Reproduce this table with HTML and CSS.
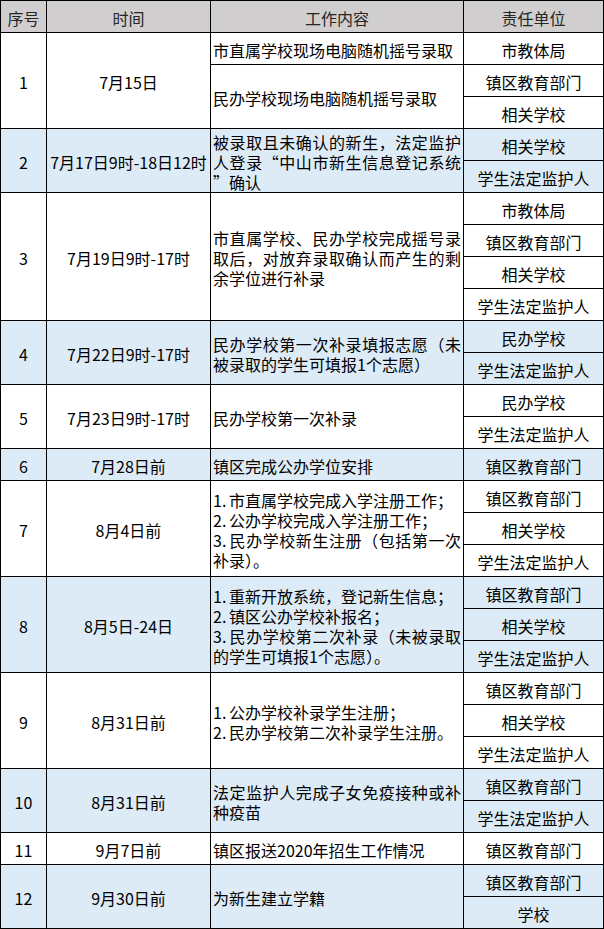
FILE: index.html
```html
<!DOCTYPE html>
<html lang="zh-CN">
<head>
<meta charset="utf-8">
<title>招生工作安排</title>
<link rel="stylesheet" href="styles.css">
</head>
<body>
<div class="sheet">
  <div class="cell head">序号</div>
  <div class="cell head">时间</div>
  <div class="cell head">工作内容</div>
  <div class="cell head">责任单位</div>

  <div class="cell c r3">1</div>
  <div class="cell c r3">7月15日</div>
  <div class="cell l">市直属学校现场电脑随机摇号录取</div>
  <div class="cell c">市教体局</div>
  <div class="cell l r2">民办学校现场电脑随机摇号录取</div>
  <div class="cell c">镇区教育部门</div>
  <div class="cell c">相关学校</div>

  <div class="cell c r2 blue">2</div>
  <div class="cell c r2 blue">7月17日9时-18日12时</div>
  <div class="cell l r2 blue any"><div class="txt">被录取且未确认的新生，法定监护人登录<span class="q">“</span>中山市新生信息登记系统<span class="q">”</span>确认</div></div>
  <div class="cell c blue">相关学校</div>
  <div class="cell c blue">学生法定监护人</div>

  <div class="cell c r4">3</div>
  <div class="cell c r4">7月19日9时-17时</div>
  <div class="cell l r4"><div class="txt">市直属学校、民办学校完成摇号录取后，对放弃录取确认而产生的剩余学位进行补录</div></div>
  <div class="cell c">市教体局</div>
  <div class="cell c">镇区教育部门</div>
  <div class="cell c">相关学校</div>
  <div class="cell c">学生法定监护人</div>

  <div class="cell c r2 blue">4</div>
  <div class="cell c r2 blue">7月22日9时-17时</div>
  <div class="cell l r2 blue"><div class="txt">民办学校第一次补录填报志愿（未被录取的学生可填报1个志愿）</div></div>
  <div class="cell c blue">民办学校</div>
  <div class="cell c blue">学生法定监护人</div>

  <div class="cell c r2">5</div>
  <div class="cell c r2">7月23日9时-17时</div>
  <div class="cell l r2">民办学校第一次补录</div>
  <div class="cell c">民办学校</div>
  <div class="cell c">学生法定监护人</div>

  <div class="cell c blue">6</div>
  <div class="cell c blue">7月28日前</div>
  <div class="cell l blue">镇区完成公办学位安排</div>
  <div class="cell c blue">镇区教育部门</div>

  <div class="cell c r3">7</div>
  <div class="cell c r3">8月4日前</div>
  <div class="cell l r3"><div class="txt"><div><span class="num">1.</span>市直属学校完成入学注册工作；</div><div><span class="num">2.</span>公办学校完成入学注册工作；</div><div><span class="num">3.</span>民办学校新生注册（包括第一次补录）。</div></div></div>
  <div class="cell c">镇区教育部门</div>
  <div class="cell c">相关学校</div>
  <div class="cell c">学生法定监护人</div>

  <div class="cell c r3 blue">8</div>
  <div class="cell c r3 blue">8月5日-24日</div>
  <div class="cell l r3 blue"><div class="txt"><div><span class="num">1.</span>重新开放系统，登记新生信息；</div><div><span class="num">2.</span>镇区公办学校补报名；</div><div><span class="num">3.</span>民办学校第二次补录（未被录取的学生可填报1个志愿）。</div></div></div>
  <div class="cell c blue">镇区教育部门</div>
  <div class="cell c blue">相关学校</div>
  <div class="cell c blue">学生法定监护人</div>

  <div class="cell c r3">9</div>
  <div class="cell c r3">8月31日前</div>
  <div class="cell l r3"><div class="txt"><div><span class="num">1.</span>公办学校补录学生注册；</div><div><span class="num">2.</span>民办学校第二次补录学生注册。</div></div></div>
  <div class="cell c">镇区教育部门</div>
  <div class="cell c">相关学校</div>
  <div class="cell c">学生法定监护人</div>

  <div class="cell c r2 blue">10</div>
  <div class="cell c r2 blue">8月31日前</div>
  <div class="cell l r2 blue"><div class="txt">法定监护人完成子女免疫接种或补种疫苗</div></div>
  <div class="cell c blue">镇区教育部门</div>
  <div class="cell c blue">学生法定监护人</div>

  <div class="cell c">11</div>
  <div class="cell c">9月7日前</div>
  <div class="cell l">镇区报送2020年招生工作情况</div>
  <div class="cell c">镇区教育部门</div>

  <div class="cell c r2 blue">12</div>
  <div class="cell c r2 blue">9月30日前</div>
  <div class="cell l r2 blue">为新生建立学籍</div>
  <div class="cell c blue">镇区教育部门</div>
  <div class="cell c blue">学校</div>
</div>
</body>
</html>
```

FILE: styles.css
```css
html, body {
  margin: 0;
  padding: 0;
  background: #ffffff;
}

body {
  font-family: "Noto Sans CJK SC", "Noto Sans", sans-serif;
  font-size: 16px;
  color: #000000;
  overflow: hidden;
}

.sheet {
  display: grid;
  grid-template-columns: 45px 163px 252px 139px;
  grid-auto-rows: 31px;
  gap: 1px;
  padding: 1px;
  width: 604px;
  box-sizing: border-box;
  background: #000000;
}

.cell {
  background: #ffffff;
  display: flex;
  align-items: center;
  padding: 3px 2px 0;
  box-sizing: border-box;
  line-height: 20px;
  white-space: nowrap;
  min-width: 0;
}

.head {
  background: #d0cece;
  justify-content: center;
  color: #262626;
}

.c {
  justify-content: center;
}

.l {
  justify-content: flex-start;
}

.txt {
  width: 100%;
  white-space: normal;
  text-align: justify;
}

.num {
  display: inline-block;
  width: 16px;
}

.any .txt {
  line-break: anywhere;
}

.q {
  font-feature-settings: "fwid";
}

.blue {
  background: #ddebf7;
}

.r2 {
  grid-row: span 2;
}

.r3 {
  grid-row: span 3;
}

.r4 {
  grid-row: span 4;
}
```
